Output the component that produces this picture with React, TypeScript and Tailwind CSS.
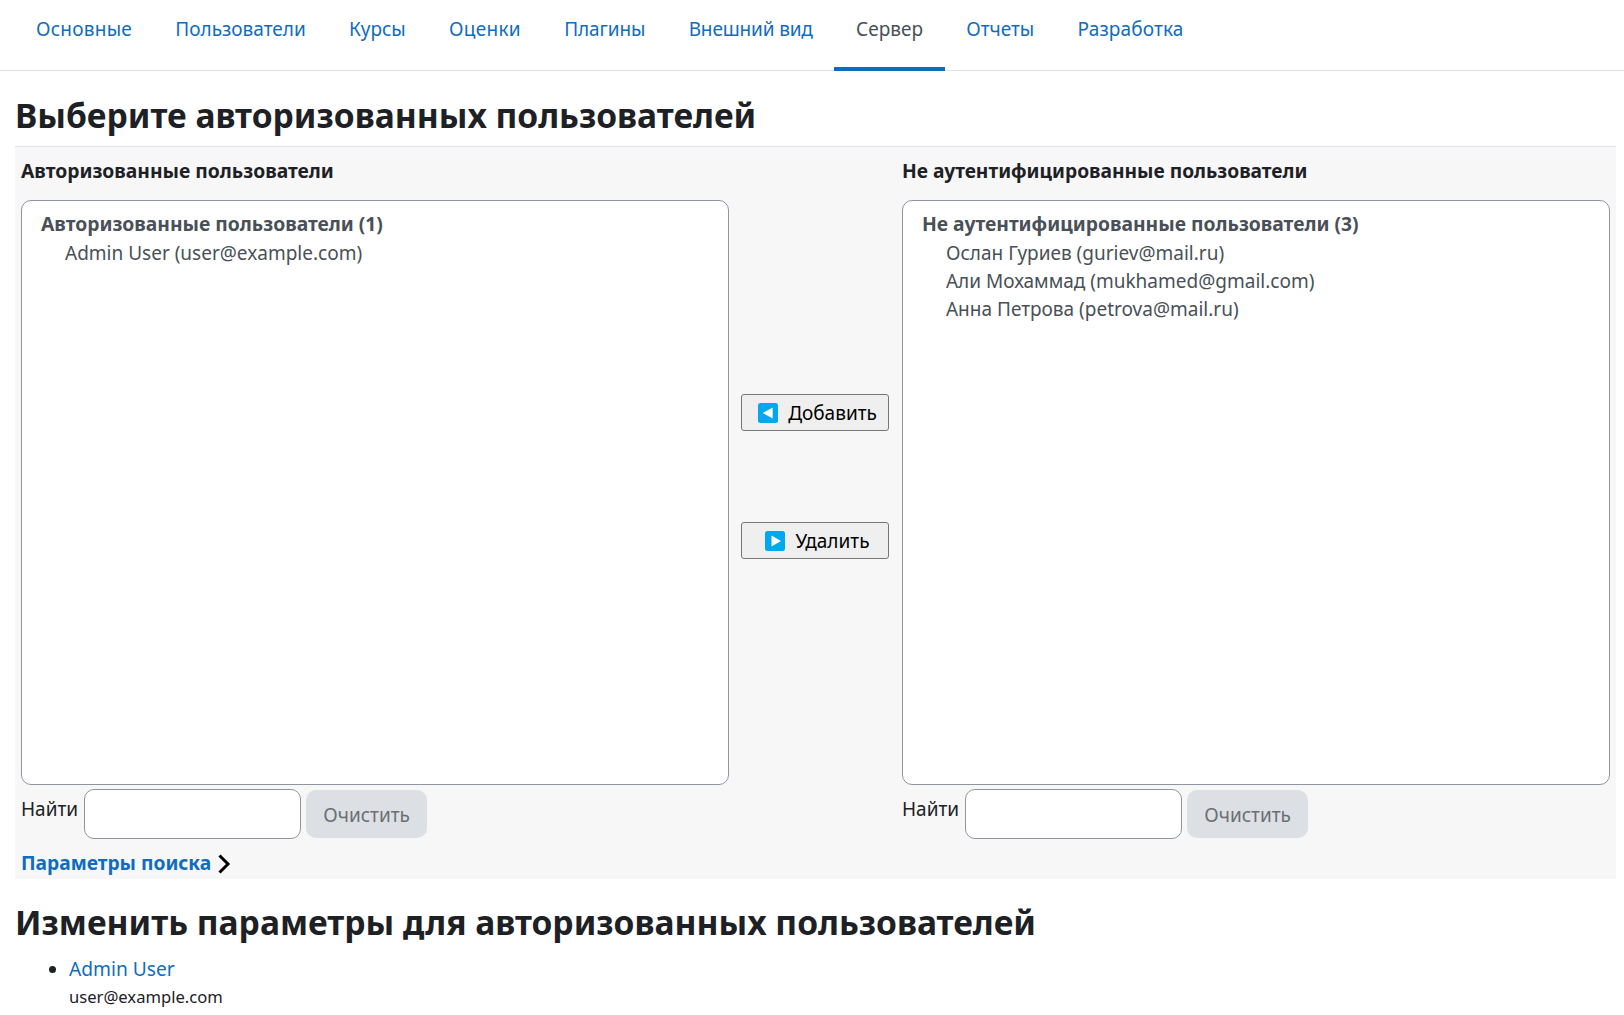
const font = "font-['Noto_Sans','Liberation_Sans',sans-serif]";

const navItems = [
  { label: "Основные", track: "tracking-[0.25px]" },
  { label: "Пользователи", track: "" },
  { label: "Курсы", track: "" },
  { label: "Оценки", track: "tracking-[0.3px]" },
  { label: "Плагины", track: "tracking-[-0.1px]" },
  { label: "Внешний вид", track: "tracking-[-0.15px]" },
  { label: "Сервер", track: "", active: true },
  { label: "Отчеты", track: "" },
  { label: "Разработка", track: "tracking-[0.15px]" },
];

function NavItem({ label, track, active }: { label: string; track: string; active?: boolean }) {
  return (
    <a
      className={
        active
          ? `flex h-[71px] items-start border-b-4 border-[#0f6cbf] px-[21.65px] pt-[15px] text-[#495057] ${track}`
          : `flex h-[71px] items-start px-[21.65px] pt-[15px] text-[#0f6cbf] ${track}`
      }
    >
      {label}
    </a>
  );
}

function Listbox({ title, people }: { title: string; people: string[] }) {
  return (
    <div className="h-[585px] rounded-[10px] border border-[#8f959e] bg-white pl-[19px] pt-[9px] text-[#495057]">
      <div className="h-[29px] text-[19.3px] font-bold leading-[28px]">{title}</div>
      {people.map((p) => (
        <div key={p} className="h-[28px] pl-[24px] leading-[28px]">
          {p}
        </div>
      ))}
    </div>
  );
}

function Search() {
  return (
    <div className="mt-[4px] flex items-start">
      <label className="mt-[6px] mr-[6px] leading-[28px] text-[#1d2125]">Найти</label>
      <input className="h-[50px] w-[217px] rounded-[10px] border border-[#8f959e] bg-white" />
      <button className="mt-[1px] ml-[5px] h-[48px] w-[121px] rounded-[10px] bg-[#dcdfe3] pt-[2px] text-[#6a6f73]">
        Очистить
      </button>
    </div>
  );
}

function MoveButton({ label, dir }: { label: string; dir: "left" | "right" }) {
  return (
    <button className="flex h-[37px] w-[148px] items-center justify-center gap-[10px] rounded-[3px] border border-[#767676] bg-[#efefef] pl-[6px] text-black">
      <svg width="20" height="20" viewBox="0 0 20 20">
        <rect width="20" height="20" rx="2.5" fill="#00a8f0" />
        {dir === "left" ? (
          <path d="M14.7 4.5V15.5L4.7 10Z" fill="#fff" />
        ) : (
          <path d="M6.5 4.5V15.5L16 10Z" fill="#fff" />
        )}
      </svg>
      <span className="pt-[1px]">{label}</span>
    </button>
  );
}

export default function App() {
  return (
    <div className={`${font} h-[1015px] overflow-hidden bg-white text-[19px] text-[#1d2125]`}>
      <nav className="flex h-[71px] border-b border-[#e2e2ea] pl-[14.35px]">
        {navItems.map((n) => (
          <NavItem key={n.label} label={n.label} track={n.track} active={n.active} />
        ))}
      </nav>
      <div className="pl-[15px] pr-[8px]">
        <h2 className="flex h-[75px] items-center pt-[14px] text-[33.6px] font-bold text-[#1d2125]">
          Выберите авторизованных пользователей
        </h2>
        <div className="h-[733px] border-t border-[#e2e2ea] bg-[#f7f7f7] pl-[6px] pr-[6px]">
          <div className="flex">
            <div className="w-[708px]">
              <div className="flex h-[53px] items-center pb-[4px] text-[19.3px] font-bold">
                Авторизованные пользователи
              </div>
              <Listbox title="Авторизованные пользователи (1)" people={["Admin User (user@example.com)"]} />
              <Search />
            </div>
            <div className="flex w-[173px] flex-col items-center pr-[2px] pt-[247px]">
              <MoveButton label="Добавить" dir="left" />
              <div className="h-[91px]" />
              <MoveButton label="Удалить" dir="right" />
            </div>
            <div className="w-[708px]">
              <div className="flex h-[53px] items-center pb-[4px] text-[19.2px] font-bold">
                Не аутентифицированные пользователи
              </div>
              <Listbox
                title="Не аутентифицированные пользователи (3)"
                people={[
                  "Ослан Гуриев (guriev@mail.ru)",
                  "Али Мохаммад (mukhamed@gmail.com)",
                  "Анна Петрова (petrova@mail.ru)",
                ]}
              />
              <Search />
            </div>
          </div>
          <div className="mt-[10px] flex items-center gap-[6px]">
            <a className="text-[19.2px] font-bold leading-[28px] text-[#0f6cbf]">Параметры поиска</a>
            <svg width="14" height="20" viewBox="0 0 14 20" fill="none" stroke="#000" strokeWidth="3" className="mt-[2px]">
              <path d="M2.5 1.5L11 10L2.5 18.5" />
            </svg>
          </div>
        </div>
        <h2 className="flex h-[76px] items-center pt-[10px] text-[33.6px] font-bold text-[#1d2125]">
          Изменить параметры для авторизованных пользователей
        </h2>
        <ul className="list-disc pl-[54px] leading-[28px]">
          <li>
            <a className="text-[19.2px] text-[#0f6cbf]">Admin User</a>
            <div className="text-[16.6px]">user@example.com</div>
          </li>
        </ul>
      </div>
    </div>
  );
}
